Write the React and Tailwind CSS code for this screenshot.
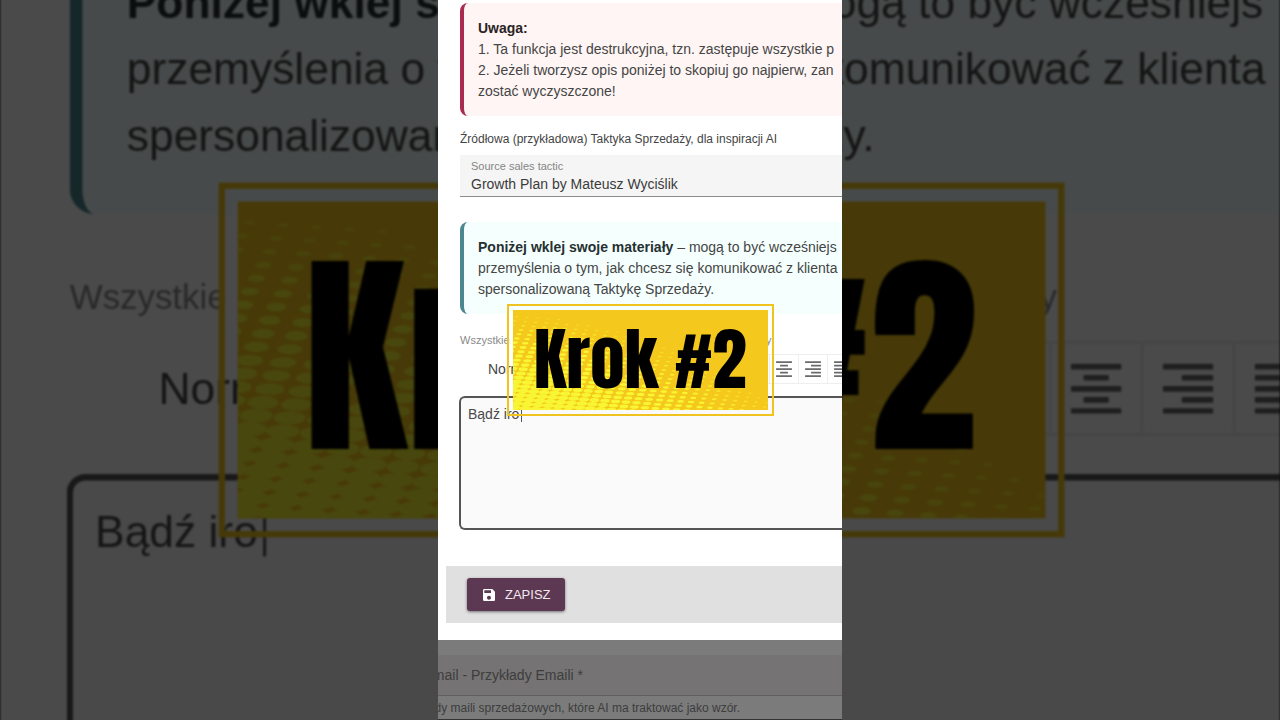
import React, { useId } from 'react'
import { MdSave } from 'react-icons/md'

// ellipses on a slanted grid, growing towards the bottom left corner
const dots = []
for (let row = -2; row < 32; row++) {
  for (let col = -2; col < 34; col++) {
    const x = 8 + col * 10.5 - row * 2.1
    const y = 2.5 + row * 4.2 + col * 0.7 - 4.2
    const edge = 4 + 0.0013 * Math.max(x, 0) ** 2
    const size = Math.min((y - edge) / (74 + 0.3 * x), 1)
    if (size > 0.03 && x > -8 && x < 262 && y < 104) {
      dots.push({ x, y, rx: 1.6 + 4.2 * size, ry: 0.6 + 1.8 * size, o: Math.min(0.35 + size * 1.8, 1) })
    }
  }
}

const toolbar = [
  { name: 'Bold', bars: [[0, 16], [0, 10], [0, 16], [0, 10], [0, 16]] },
  { name: 'Italic', bars: [[0, 16], [0, 10], [0, 16], [0, 10], [0, 16]] },
  { name: 'Underline', bars: [[0, 16], [0, 10], [0, 16], [0, 10], [0, 16]] },
  { name: 'Align left', bars: [[0, 16], [0, 10], [0, 16], [0, 10], [0, 16]] },
  { name: 'Align center', bars: [[0, 16], [4, 8], [0, 16], [4, 8], [0, 16]] },
  { name: 'Align right', bars: [[0, 16], [6, 10], [0, 16], [6, 10], [0, 16]] },
  { name: 'Justify', bars: [[0, 16], [0, 16], [0, 16], [0, 16], [0, 16]] },
]

const Notice = ({ className, children }) => (
  <div className={`ml-[22px] rounded-l-lg border-l-4 pt-[15px] pb-3.5 pl-3.5 text-sm leading-[21px] text-[#454545] whitespace-nowrap overflow-hidden ${className}`}>
    {children}
  </div>
)

const Banner = () => (
  <div className="absolute inset-0 flex items-center justify-center">
    <div className="border-2 border-[#f0c31e] p-1">
      <div className="relative flex h-[100px] w-[255px] items-center justify-center overflow-hidden bg-[#f4c81c] pb-px">
        <svg className="absolute inset-0 h-full w-full" viewBox="0 0 255 100" fill="#f8f632" aria-hidden="true">
          {dots.map((d, i) => (
            <ellipse key={i} cx={d.x} cy={d.y} rx={d.rx} ry={d.ry} opacity={d.o} />
          ))}
        </svg>
        <h1 className="relative whitespace-nowrap font-['Anton','Liberation_Sans_Narrow',sans-serif] text-[69px] leading-none text-black">
          Krok #2
        </h1>
      </div>
    </div>
  </div>
)

const Scene = () => {
  const id = useId()

  return (
    <div className="relative flex h-screen aspect-[101/180] flex-col overflow-hidden bg-white pt-[3px] font-['Liberation_Sans',Arial,sans-serif]">
      <Notice className="border-[#a92c50] bg-[#fef5f4]">
        <strong className="text-[#2a2324]">Uwaga:</strong>
        <br />
        1. Ta funkcja jest destrukcyjna, tzn. zastępuje wszystkie p
        <br />
        2. Jeżeli tworzysz opis poniżej to skopiuj go najpierw, zan
        <br />
        zostać wyczyszczone!
      </Notice>

      <label htmlFor={`${id}-tactic`} className="mt-[15px] ml-[22px] text-xs leading-4 text-[#444]">
        Źródłowa (przykładowa) Taktyka Sprzedaży, dla inspiracji AI
      </label>
      <div className="mt-2 ml-[22px] flex h-[42px] flex-col border-b border-[#8c8c8c] bg-[#f5f5f5] pt-[3px] pl-[11px]">
        <span className="text-[11px] leading-4 text-[#858585]">Source sales tactic</span>
        <select id={`${id}-tactic`} className="h-5 appearance-none bg-transparent text-sm leading-5 text-[#3b3b3b]">
          <option>Growth Plan by Mateusz Wyciślik</option>
        </select>
      </div>

      <Notice className="mt-[25px] border-[#4c8790] bg-[#f4fffe]">
        <strong className="text-[#263031]">Poniżej wklej swoje materiały</strong> – mogą to być wcześniejs
        <br />
        przemyślenia o tym, jak chcesz się komunikować z klienta
        <br />
        spersonalizowaną Taktykę Sprzedaży.
      </Notice>

      <label htmlFor={`${id}-text`} className="mt-[18px] ml-[22px] text-[11px] leading-4 whitespace-nowrap text-[#8a8a8a]">
        Wszystkie materiały potrzebne do stworzenia Taktyki Sprzedaży
      </label>
      <div className="mt-1.5 flex h-[30px] justify-start pl-[50px]">
        <select aria-label="Format" className="w-[165px] shrink-0 appearance-none text-sm text-[#454545]">
          <option>Normal</option>
        </select>
        {toolbar.map((tool) => (
          <button key={tool.name} type="button" aria-label={tool.name} className="-mr-px flex w-[30px] shrink-0 items-center justify-center border border-[#eee]">
            <svg className="h-4 w-4" viewBox="0 0 16 16" fill="#6a6a6a">
              {tool.bars.map(([x, w], i) => (
                <rect key={i} x={x} y={i * 3.5 + 0.2} width={w} height="1.8" rx="0.4" />
              ))}
            </svg>
          </button>
        ))}
      </div>

      <div className="relative mt-3 ml-[21px] h-[134px] rounded-l-md border-2 border-r-0 border-[#555] bg-[#fafafa]">
        <textarea
          id={`${id}-text`}
          className="block h-full w-full resize-none px-[7px] py-1.5 text-sm leading-[21px] text-[#4a4a4a] outline-none"
          defaultValue="Bądź iro"
        />
        <span className="absolute top-2 left-[60px] h-4 w-px bg-[#555]" />
      </div>

      <div className="mt-9 ml-2 bg-[#e0e0e0] px-[21px] py-3">
        <button type="button" className="flex h-[33px] items-center gap-2 rounded-[3px] bg-[#5c3852] px-3.5 text-[13px] text-[#f3e8f0] shadow-[0_1px_3px_rgba(0,0,0,0.5)]">
          <MdSave className="h-4 w-4 text-white" />
          ZAPISZ
        </button>
      </div>

      <div className="mt-[17px] grow border-b border-[#333] bg-[#7b7b7b] pt-[15px] text-[#3d3d3d]">
        <div className="border-b border-[#5f5f5f] bg-[#757373] py-2.5">
          <p className="flex w-[145px] justify-end text-sm leading-5 whitespace-nowrap">Email - Przykłady Emaili *</p>
        </div>
        <p className="flex w-[302px] justify-end pt-1 text-xs leading-4 whitespace-nowrap">
          Przykłady maili sprzedażowych, które AI ma traktować jako wzór.
        </p>
      </div>

      <Banner />
    </div>
  )
}

const App = () => {
  return (
    <main className="relative flex h-screen justify-center overflow-hidden bg-black">
      {/* enlarged, darkened copy that fills the sides */}
      <div className="absolute inset-0 flex justify-center blur-[1px]" aria-hidden="true" inert>
        <div className="shrink-0 scale-[3.168]">
          <Scene />
        </div>
      </div>
      <div className="absolute inset-0 bg-black/71" />
      <Scene />
    </main>
  )
}

export default App
